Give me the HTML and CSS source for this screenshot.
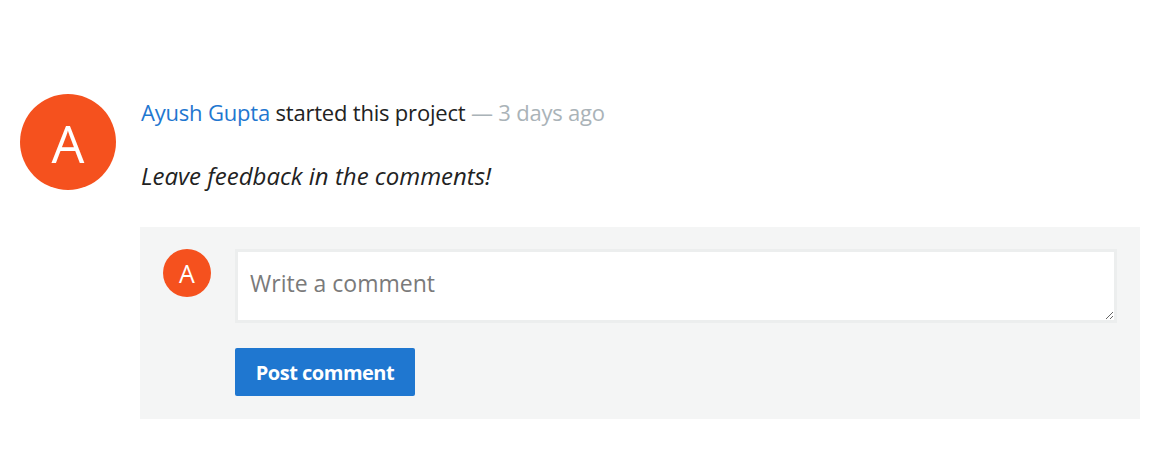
FILE: index.html
```html
<!DOCTYPE html>
<html>
<head>
<meta charset="utf-8">
<link rel="stylesheet" href="styles.css">
</head>
<body>
<div class="feed-item">
  <div class="avatar avatar-lg">A</div>
  <div class="feed-body">
    <div class="headline"><a class="author" href="#">Ayush Gupta</a> started this project <span class="time">— 3 days ago</span></div>
    <p class="message">Leave feedback in the comments!</p>
    <div class="comment-box">
      <div class="avatar avatar-sm">A</div>
      <div class="comment-form">
        <textarea class="comment-input" placeholder="Write a comment"></textarea>
        <button class="post-btn">Post comment</button>
      </div>
    </div>
  </div>
</div>
</body>
</html>
```

FILE: styles.css
```css
html, body {
  margin: 0;
  background: #fff;
}
body {
  font-family: "Open Sans", sans-serif;
  color: #222;
}
.feed-item {
  display: flex;
  padding: 94px 12px 0 20px;
  gap: 24px;
}
.avatar {
  flex: none;
  border-radius: 50%;
  background: #f5511e;
  color: #fff;
  display: flex;
  align-items: center;
  justify-content: center;
}
.avatar-lg {
  width: 96px;
  height: 96px;
  font-size: 52px;
}
.avatar-sm {
  width: 48px;
  height: 48px;
  font-size: 25px;
}
.feed-body {
  flex: 1;
  padding-top: 4px;
}
.headline {
  font-size: 22px;
  line-height: 28px;
  letter-spacing: -0.2px;
  margin-left: 1px;
}
.author {
  color: #1f77d0;
  text-decoration: none;
}
.time {
  color: #aab3b8;
}
.message {
  margin: 36px 0 0 1px;
  font-size: 24px;
  line-height: 28px;
  font-style: italic;
}
.comment-box {
  margin-top: 37px;
  background: #f4f5f5;
  padding: 22px 23px 23px 23px;
  display: flex;
  gap: 24px;
}
.comment-form {
  flex: 1;
  display: flex;
  flex-direction: column;
  align-items: flex-start;
  gap: 25px;
}
.comment-input {
  width: 100%;
  height: 74px;
  box-sizing: border-box;
  border: 3px solid #eceeee;
  background: #fff;
  padding: 17px 12px;
  font-family: "Open Sans", sans-serif;
  font-size: 23px;
  line-height: 28px;
  color: #333;
  margin: 0;
  display: block;
}
.comment-input::placeholder {
  color: #7a7a7a;
}
.post-btn {
  width: 180px;
  height: 48px;
  background: #1f77d0;
  color: #fff;
  border: none;
  border-radius: 2px;
  font-family: "Open Sans", sans-serif;
  font-weight: 700;
  font-size: 20px;
  letter-spacing: -0.5px;
  cursor: pointer;
}
```
